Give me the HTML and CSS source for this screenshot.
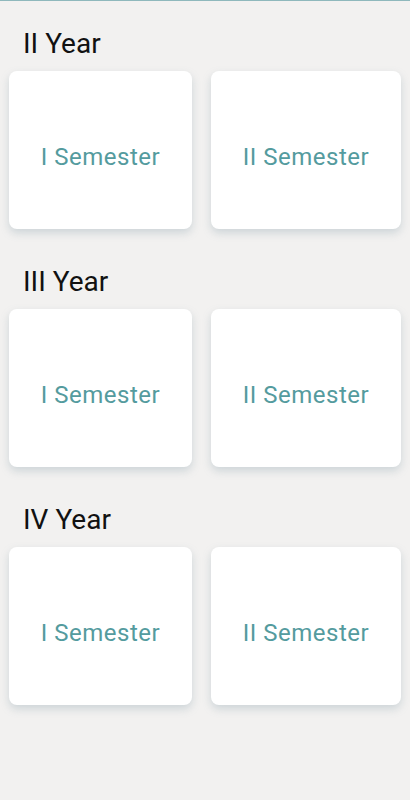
FILE: index.html
```html
<!DOCTYPE html>
<html lang="en">

<head>
    <meta charset="UTF-8">
    <meta name="viewport" content="width=device-width, initial-scale=1.0">
    <title>Semesters</title>
    <link rel="stylesheet" href="styles.css">
</head>

<body>
    <div class="page">
        <!-- II Year -->
        <div class="year">
            <h2 class="year-title">II Year</h2>
            <div class="sem-grid">
                <a class="sem-card" href="javascript:;">I Semester</a>
                <a class="sem-card" href="javascript:;">II Semester</a>
            </div>
        </div>

        <!-- III Year -->
        <div class="year">
            <h2 class="year-title">III Year</h2>
            <div class="sem-grid">
                <a class="sem-card" href="javascript:;">I Semester</a>
                <a class="sem-card" href="javascript:;">II Semester</a>
            </div>
        </div>

        <!-- IV Year -->
        <div class="year">
            <h2 class="year-title">IV Year</h2>
            <div class="sem-grid">
                <a class="sem-card" href="javascript:;">I Semester</a>
                <a class="sem-card" href="javascript:;">II Semester</a>
            </div>
        </div>
    </div>
</body>

</html>
```

FILE: styles.css
```css
* {
    margin: 0;
    padding: 0;
    box-sizing: border-box;
}

body {
    background-color: #f2f1f0;
    font-family: Roboto, "Noto Sans", Arial, sans-serif;
    min-height: 800px;
}

/* 顶部细线 */
.page {
    border-top: 1px solid #8fb8bc;
    padding-top: 27px;
}

.year + .year {
    margin-top: 37px;
}

.year-title {
    font-size: 28px;
    font-weight: 400;
    line-height: 32px;
    color: #111;
    padding-left: 23px;
    margin-bottom: 11px;
}

/* 两列卡片 */
.sem-grid {
    display: grid;
    grid-template-columns: 183px 1fr;
    column-gap: 19px;
    padding: 0 9px;
}

.sem-card {
    height: 158px;
    padding-top: 14px;
    display: flex;
    align-items: center;
    justify-content: center;
    background-color: #fff;
    border-radius: 8px;
    box-shadow: 0 4px 8px rgba(110, 140, 155, 0.28);
    color: #549b9e;
    font-size: 24px;
    letter-spacing: 0.5px;
    text-decoration: none;
}
```
